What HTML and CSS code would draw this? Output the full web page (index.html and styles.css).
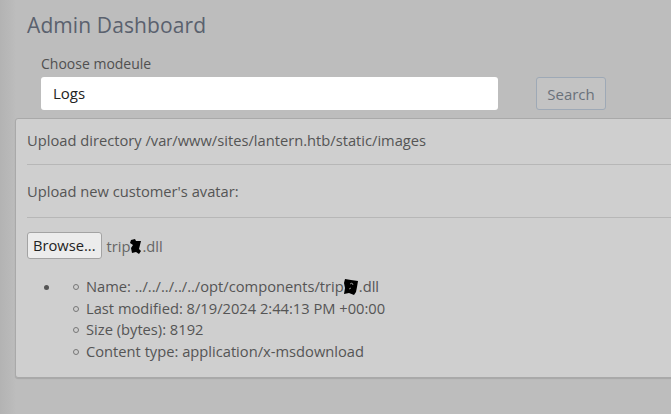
FILE: index.html
```html
<!DOCTYPE html>
<html>
<head>
<meta charset="utf-8">
<link rel="stylesheet" href="styles.css">
</head>
<body>
<div class="page">
  <h1 class="title">Admin Dashboard</h1>
  <div class="search-row">
    <div class="field">
      <label class="label">Choose modeule</label>
      <div class="input">Logs</div>
    </div>
    <button class="btn-search">Search</button>
  </div>
  <div class="card">
    <div class="row row-first">Upload directory /var/www/sites/lantern.htb/static/images</div>
    <div class="row row-second">Upload new customer's avatar:</div>
    <div class="row row-third">
      <div class="file">
        <span class="browse">Browse...</span>
        <span class="fname">trip<svg class="redact" width="12" height="15" viewBox="0 0 12 15"><path d="M1 1 L5 0 L6 2 L11 2 L10 6 L9 10 L11 12 L9 15 L6 13 L2 14 L1 9 L3 6 L0 4 Z" fill="#000"/></svg>.dll</span>
      </div>
      <ul class="outer">
        <li>
          <ul class="inner">
            <li>Name: ../../../../../opt/components/trip<svg class="redact2" width="15" height="16" viewBox="0 0 15 16"><path d="M1 0 L7 1 L14 2 L13 8 L12 13 L10 16 L5 14 L0 15 L1 9 L0 4 Z" fill="#000"/><path d="M6 5 L8 4 L9 6 M5 10 L7 9" stroke="#888" stroke-width="1" fill="none"/></svg>.dll</li>
            <li>Last modified: 8/19/2024 2:44:13 PM +00:00</li>
            <li>Size (bytes): 8192</li>
            <li>Content type: application/x-msdownload</li>
          </ul>
        </li>
      </ul>
    </div>
  </div>
</div>
</body>
</html>
```
FILE: styles.css
```css
html, body {
  margin: 0;
  padding: 0;
  overflow: hidden;
}
body {
  background: linear-gradient(to right, #b3b3b3 0px, #bababa 12px, #bdbdbd 16px);
  font-family: "Open Sans", "Noto Sans", sans-serif;
  color: #555;
  height: 414px;
}
.page {
  padding-top: 11px;
}
.title {
  margin: 0 0 0 27px;
  font-family: "Open Sans", sans-serif;
  font-weight: 400;
  font-size: 21px;
  line-height: 28px;
  color: #5a616e;
  letter-spacing: 0.1px;
}
.search-row {
  display: flex;
  align-items: flex-end;
  margin: 15px 0 0 41px;
  gap: 38px;
}
.field {
  display: flex;
  flex-direction: column;
  width: 457px;
}
.label {
  font-size: 14px;
  line-height: 20px;
  color: #505050;
  margin-bottom: 3px;
}
.input {
  height: 33px;
  box-sizing: border-box;
  background: #fff;
  border-radius: 3px;
  padding-left: 12px;
  font-size: 15px;
  line-height: 33px;
  color: #222;
}
.btn-search {
  width: 70px;
  height: 33px;
  background: #c3c3c3;
  border: 1px solid #9ea9b6;
  border-radius: 3px;
  font-family: "Open Sans", sans-serif;
  font-size: 15px;
  color: #6a717a;
  padding: 0;
}
.card {
  margin: 8px -20px 0 15px;
  background: #cfcfcf;
  border: 1px solid #a9a9a9;
  border-radius: 3px;
  box-shadow: 0 1px 1px rgba(0,0,0,0.12);
  padding-left: 11px;
}
.row {
  font-size: 14.7px;
  line-height: 22px;
  color: #555;
}
.row-first {
  padding: 10px 0 13px;
  border-bottom: 1px solid #b7b7b7;
}
.row-second {
  padding: 15px 0 15px;
  border-bottom: 1px solid #b7b7b7;
}
.row-third {
  padding: 14px 0 14px;
}
.file {
  display: flex;
  align-items: center;
  gap: 5px;
}
.browse {
  display: inline-block;
  height: 27px;
  box-sizing: border-box;
  padding: 0 5px;
  line-height: 25px;
  background: #ececec;
  border: 1px solid #a3a3a3;
  border-radius: 3px;
  color: #222;
  font-size: 14.7px;
}
.fname {
  color: #666;
}
.redact {
  vertical-align: -2px;
}
.redact2 {
  vertical-align: -3px;
}
.outer {
  margin: 16px 0 0;
  padding-left: 34px;
  list-style: disc;
  color: #555;
}
.inner {
  margin: 0;
  padding-left: 25px;
  list-style: none;
}
.inner li {
  line-height: 21.7px;
}
.inner li::before {
  content: "";
  display: inline-block;
  width: 4px;
  height: 4px;
  border: 1px solid #777;
  border-radius: 50%;
  margin-left: -13px;
  margin-right: 7px;
  vertical-align: 2px;
}
```
